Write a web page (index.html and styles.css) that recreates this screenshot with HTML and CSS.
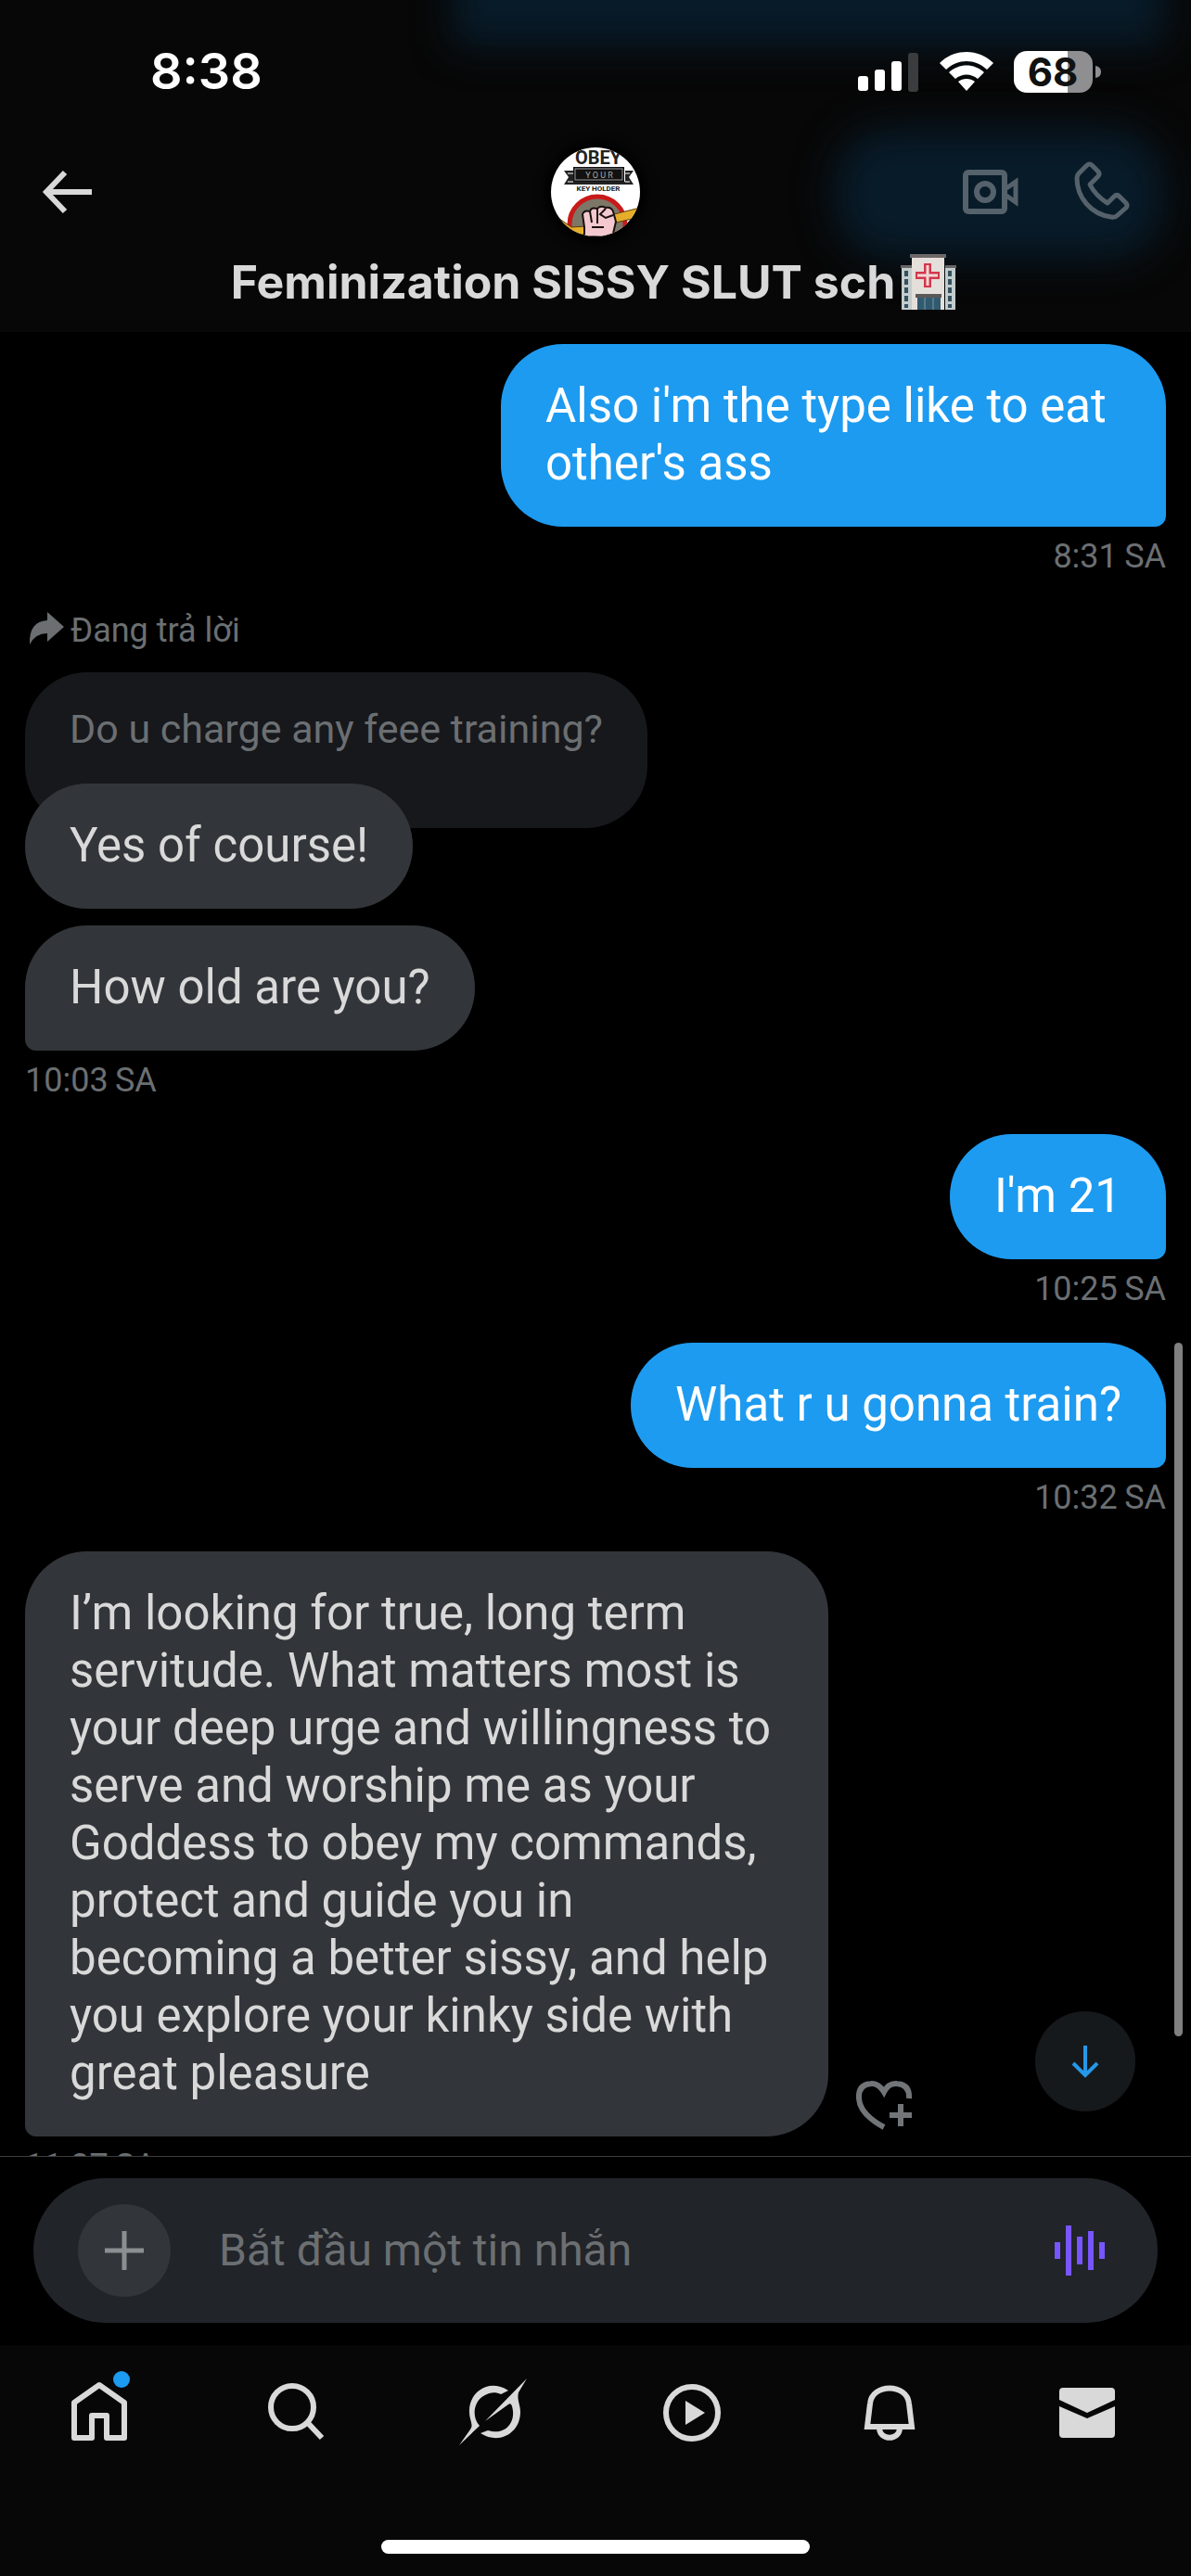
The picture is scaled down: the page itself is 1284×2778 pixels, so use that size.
FILE: index.html
```html
<!DOCTYPE html>
<html lang="vi">
<head>
<meta charset="utf-8">
<meta name="viewport" content="width=device-width, initial-scale=1">
<title>Messages</title>
<link rel="stylesheet" href="styles.css">
</head>
<body>
<div class="app">
  <header class="header">
    <div class="glow glow-top"></div>
    <div class="glow glow-side"></div>
    <div class="status">
      <span class="clock">8:38</span>
      <svg class="status-icons" viewBox="0 0 264 48" width="264" height="48" aria-hidden="true">
        <g fill="#fff">
          <rect x="1" y="29" width="11" height="16" rx="3"/>
          <rect x="19" y="22" width="11" height="23" rx="3"/>
          <rect x="37" y="13" width="11" height="32" rx="3"/>
          <rect x="55" y="4" width="11" height="42" rx="3" fill="#3a3c3e"/>
          <path d="M89 15C105-1 131-1 147 15L140 22C127 10 109 10 96 22Z"/>
          <path d="M99 25C110 15 126 15 137 25L130 32C123 26 113 26 106 32Z"/>
          <path d="M109 35C114 31 122 31 127 35L118 45Z"/>
        </g>
        <path d="M227 2V47H183A14 14 0 0 1 169 33V16A14 14 0 0 1 183 2Z" fill="#fff"/>
        <path d="M227 2H240A14 14 0 0 1 254 16V33A14 14 0 0 1 240 47H227Z" fill="#8f8f91"/>
        <path d="M257 18Q263 19 263 24.500T257 31Z" fill="#8f8f91"/>
        <text x="211" y="40" text-anchor="middle" class="battery">68</text>
      </svg>
    </div>
    <div class="bar">
      <button class="icon-btn" aria-label="Back">
        <svg viewBox="0 0 72 72" width="72" height="72"><path d="M63 36H14M34 15L14 36L34 57" fill="none" stroke="#d9d9d9" stroke-width="6"/></svg>
      </button>
      <svg class="avatar" viewBox="0 0 96 96" width="96" height="96" role="img" aria-label="Avatar">
        <defs><clipPath id="round"><circle cx="48" cy="48" r="48"/></clipPath></defs>
        <g clip-path="url(#round)">
          <rect width="96" height="96" fill="#fff"/>
          <text x="51" y="18" text-anchor="middle" class="av-big">OBEY</text>
          <path d="M14 25H26V37H80V25H89L84 32L89 40H14L19 32Z" fill="#222"/>
          <path d="M18 28H24M18 37H24M80 28H85M80 37H85" stroke="#fff" stroke-width="1"/>
          <rect x="24" y="21" width="55" height="16" fill="#111"/>
          <rect x="26" y="23" width="51" height="12" fill="none" stroke="#999"/>
          <text x="52" y="33" text-anchor="middle" class="av-mid">Y O U R</text>
          <text x="51" y="47" text-anchor="middle" class="av-small">KEY HOLDER</text>
          <circle cx="50" cy="83" r="30" fill="#7d7767" stroke="#c91a1a" stroke-width="5"/>
          <path d="M8 76L22 86L38 85L68 72L96 65V75L70 81L45 92L22 96Z" fill="#e6ad2a" stroke="#5b3d0a"/>
          <path d="M36 96V86L34 72Q36 67 42 69Q43 64 50 66Q53 62 59 65Q65 64 67 69L70 80L66 97Z" fill="#f3c9cf" stroke="#1a1010" stroke-width="2"/>
          <path d="M42 69L44 81M50 66V82M59 66L53 72L59 76L67 73M44 86H57" fill="none" stroke="#1a1010" stroke-width="2"/>
        </g>
      </svg>
      <div class="calls">
        <button class="icon-btn" aria-label="Video call">
          <svg viewBox="0 0 72 72" width="72" height="72"><g fill="none" stroke="#55626b" stroke-width="6"><rect x="9" y="15" width="42" height="42" rx="3"/><circle cx="30" cy="36" r="9"/><path d="M53 32L63 25V47L53 40" stroke-width="5"/></g></svg>
        </button>
        <button class="icon-btn" aria-label="Voice call">
          <svg viewBox="0 0 72 72" width="72" height="72"><path d="M20 7Q23 5 25 7L32 14Q34 17 32 19L23 28Q29 40 42 48L49 41Q52 38 55 41L62 48Q64 51 62 53L53 61Q50 64 46 63C24 60 9 42 9 21Q9 18 11 16Z" fill="none" stroke="#55626b" stroke-width="5" stroke-linejoin="round"/></svg>
        </button>
      </div>
    </div>
    <h1 class="title">Feminization SISSY SLUT sch
      <svg class="hospital" viewBox="0 0 60 60" width="60" height="60" role="img" aria-label="Hospital">
        <path d="M1 14H12V60H1ZM48 14H59V60H48Z" fill="#c3cccd"/>
        <path d="M0 12H12V15H0ZM48 12H60V15H48Z" fill="#666"/>
        <path d="M12 3H47V60H12Z" fill="#e4dfda"/>
        <path d="M10 0H49V4H10Z" fill="#6c6868"/>
        <path d="M6 18V58M53 18V58" stroke="#34515d" stroke-width="4" stroke-dasharray="6 3"/>
        <path d="M29 10V36M16 23H42" stroke="#d2384a" stroke-width="8"/>
        <path d="M29 12V34M18 23H40" stroke="#f1d8d8" stroke-width="3"/>
        <path d="M16 43H44V47H16Z" fill="#5b5858"/>
        <path d="M18 47H43V60H18Z" fill="#315a70"/>
        <path d="M26 47V60M35 47V60" stroke="#7d98a4" stroke-width="1"/>
      </svg>
    </h1>
  </header>

  <main class="chat">
    <p class="bubble mine">Also i'm the type like to eat other's ass</p>
    <time class="stamp right">8:31&#8201;SA</time>

    <div class="reply-label">
      <svg viewBox="0 0 40 40" width="40" height="40" aria-hidden="true"><path d="M21 2L39 18L21 34V25Q8 25 2 37Q1 12 21 11Z" fill="#6b6f72"/></svg>
      <span>Đang trả lời</span>
    </div>
    <p class="bubble quote">Do u charge any feee training?</p>
    <p class="bubble theirs round over">Yes of course!</p>
    <p class="bubble theirs">How old are you?</p>
    <time class="stamp">10:03&#8201;SA</time>

    <p class="bubble mine">I'm 21</p>
    <time class="stamp right">10:25&#8201;SA</time>

    <p class="bubble mine">What r u gonna train?</p>
    <time class="stamp right">10:32&#8201;SA</time>

    <div class="with-reaction">
      <p class="bubble theirs">I’m looking for true, long term servitude. What matters most is your deep urge and willingness to serve and worship me as your Goddess to obey my commands, protect and guide you in becoming a better sissy, and help you explore your kinky side with great pleasure</p>
      <button class="icon-btn" aria-label="Add reaction">
        <svg viewBox="0 0 72 72" width="72" height="72"><path d="M63 31Q64 16 50 15Q41 14 36 24Q30 14 22 15Q8 16 9 31Q10 48 36 62" fill="none" stroke="#717578" stroke-width="6"/><path d="M54 37V61M42 49H66" stroke="#717578" stroke-width="6"/></svg>
      </button>
    </div>
    <time class="stamp">11:37&#8201;SA</time>

    <div class="scrollbar"></div>
    <button class="to-bottom" aria-label="Scroll to latest">
      <svg viewBox="0 0 36 36" width="36" height="36"><path d="M18 1V34M5 20L18 33L31 20" fill="none" stroke="#2598e8" stroke-width="4"/></svg>
    </button>
  </main>

  <form class="composer">
    <div class="field">
      <button type="button" class="plus" aria-label="Add">
        <svg viewBox="0 0 42 42" width="42" height="42"><path d="M21 0V42M0 21H42" stroke="#8b8f92" stroke-width="5"/></svg>
      </button>
      <input class="input" type="text" placeholder="Bắt đầu một tin nhắn" aria-label="Bắt đầu một tin nhắn">
      <button type="button" class="icon-btn" aria-label="Voice message">
        <svg viewBox="0 0 72 72" width="72" height="72"><path d="M12 27V45M24 9V63M36 21V51M48 15V57M60 27V45" stroke="#7856ff" stroke-width="6"/></svg>
      </button>
    </div>
  </form>

  <footer class="footer">
    <nav class="tabs">
      <a href="#home" aria-label="Home"><svg viewBox="0 0 72 72" width="72" height="72"><path d="M9 27L36 8L63 27V65H44V41H28V65H9Z" fill="none" stroke="#d9d9d9" stroke-width="6" stroke-linejoin="round"/><circle cx="60" cy="2" r="9" fill="#1d9bf0"/></svg></a>
      <a href="#search" aria-label="Search"><svg viewBox="0 0 72 72" width="72" height="72"><g fill="none" stroke="#d9d9d9" stroke-width="6"><circle cx="31" cy="32" r="23"/><path d="M47 48L63 65"/></g></svg></a>
      <a href="#grok" aria-label="Grok"><svg viewBox="0 0 72 72" width="72" height="72"><g fill="#d9d9d9"><path d="M51 14C29 0 8 17 9 37C9 46 14 51 10 56L-2 73L20 52C11 42 14 26 24 20C30 16 37 15 43 18Z"/><path d="M71 1L26 47L51 29Q54 27 55 31C60 48 48 63 29 57L21 60C41 73 64 60 64 37C64 29 60 24 62 16Z"/></g></svg></a>
      <a href="#video" aria-label="Video"><svg viewBox="0 0 72 72" width="72" height="72"><circle cx="36" cy="38" r="28" fill="none" stroke="#d9d9d9" stroke-width="6"/><path d="M29 25L50 38L29 51Z" fill="#d9d9d9"/></svg></a>
      <a href="#alerts" aria-label="Notifications"><svg viewBox="0 0 72 72" width="72" height="72"><g fill="none" stroke="#d9d9d9" stroke-width="6"><path d="M12 53H60L57 28C55 6 17 6 15 28Z"/><path d="M25 55C26 68 46 68 47 55"/></g></svg></a>
      <a href="#messages" aria-label="Messages"><svg viewBox="0 0 72 72" width="72" height="72"><path d="M6 24V15Q6 11 10 11H62Q66 11 66 15V24L36 38ZM6 31L36 44L66 31V61Q66 65 62 65H10Q6 65 6 61Z" fill="#d9d9d9"/></svg></a>
    </nav>
    <div class="home-indicator"></div>
  </footer>
</div>
</body>
</html>
```
FILE: styles.css
```css
* { box-sizing: border-box; }

body {
  margin: 0;
  background: #000;
  color: #d9d9d9;
  font-family: Roboto, "Noto Sans", sans-serif;
}

button { border: 0; padding: 0; background: none; }
p, h1 { margin: 0; }
svg { display: block; overflow: visible; }
.icon-btn { width: 72px; height: 72px; flex: none; }

.app {
  display: flex;
  flex-direction: column;
  height: 100vh;
}

/* Header */
.header {
  position: relative;
  flex: none;
  overflow: hidden;
  padding-bottom: 23px;
  background: #070707;
}
.header > * { position: relative; }
.header > .glow {
  position: absolute;
  background: #081b29;
  filter: blur(20px);
}
.glow-top { top: -80px; left: 38%; right: 28px; height: 130px; }
.glow-side { top: 138px; left: 70%; right: 28px; height: 142px; border-radius: 60px; }

.status {
  display: flex;
  justify-content: space-between;
  align-items: center;
  padding: 45px 96px 0 162px;
}
.clock {
  font: 600 54px/64px Inter, sans-serif;
  color: #fff;
}
.battery { font: 700 42px Inter, sans-serif; fill: #111; }

.bar {
  display: grid;
  grid-template-columns: 1fr auto 1fr;
  align-items: center;
  padding: 50px 36px 18px;
}
.calls {
  display: flex;
  justify-content: flex-end;
  gap: 48px;
  margin-right: 24px;
}
.avatar { border-radius: 50%; box-shadow: 0 0 12px 6px #000; }
.av-big { font: 700 20px Roboto, sans-serif; fill: #222; }
.av-mid { font: 400 9px Roboto, sans-serif; fill: #aaa; }
.av-small { font: 700 8px Roboto, sans-serif; fill: #222; }

.title {
  display: flex;
  justify-content: center;
  align-items: center;
  gap: 6px;
  padding-right: 4px;
  font: 700 50px/62px Inter, sans-serif;
}

/* Conversation */
.chat {
  position: relative;
  display: flex;
  flex: 1;
  flex-direction: column;
  align-items: flex-start;
  min-height: 0;
  overflow: hidden;
  padding: 13px 27px 0;
}
.chat > * { flex: none; }
.bubble {
  padding: 36px 48px 37px;
  border-radius: 67px;
  font-size: 51px;
  line-height: 62px;
}
.mine {
  align-self: flex-end;
  max-width: 717px;
  border-bottom-right-radius: 12px;
  background: #1d9bf0;
  color: #fff;
}
.theirs {
  max-width: 866px;
  border-bottom-left-radius: 12px;
  background: #323539;
}
.round { border-radius: 67px; }
.quote {
  padding: 34px 48px 80px;
  background: #17181c;
  color: #6b6f72;
  font-size: 43px;
  line-height: 54px;
}
.over { position: relative; margin: -48px 0 18px; }

.stamp, .reply-label {
  color: #6b6f72;
  font-size: 36px;
  line-height: 45px;
}
.stamp { margin: 10px 0 35px; }
.right { align-self: flex-end; }
.reply-label {
  display: flex;
  gap: 6px;
  margin: 0 0 22px 3px;
}

.with-reaction {
  display: flex;
  align-items: flex-end;
  gap: 24px;
}

.scrollbar {
  position: absolute;
  top: 1090px;
  right: 9px;
  bottom: 129px;
  width: 9px;
  border-radius: 5px;
  background: #808080;
}
.to-bottom {
  position: absolute;
  right: 60px;
  bottom: 48px;
  display: grid;
  place-items: center;
  width: 108px;
  height: 108px;
  border-radius: 50%;
  background: #16191c;
}

/* Composer */
.composer {
  flex: none;
  padding: 23px 36px 24px;
  border-top: 1px solid #3a3c3e;
}
.field {
  display: flex;
  align-items: center;
  height: 156px;
  padding: 0 48px;
  border-radius: 78px;
  background: #212429;
}
.plus {
  display: grid;
  flex: none;
  place-items: center;
  width: 100px;
  height: 100px;
  border-radius: 50%;
  background: #323539;
}
.input {
  flex: 1;
  min-width: 0;
  margin-left: 50px;
  border: 0;
  outline: 0;
  background: none;
  color: #d9d9d9;
  font: 400 48px/60px Roboto, "Noto Sans", sans-serif;
}
.input::placeholder { color: #6b6f72; opacity: 1; }

/* Tab bar */
.footer {
  flex: none;
  padding: 35px 0 24px;
  background: #070707;
}
.tabs {
  display: grid;
  grid-template-columns: repeat(6, 1fr);
  justify-items: center;
  padding-right: 6px;
}
.home-indicator {
  width: 36%;
  height: 15px;
  margin: 103px auto 0;
  border-radius: 8px;
  background: #fff;
}
```
